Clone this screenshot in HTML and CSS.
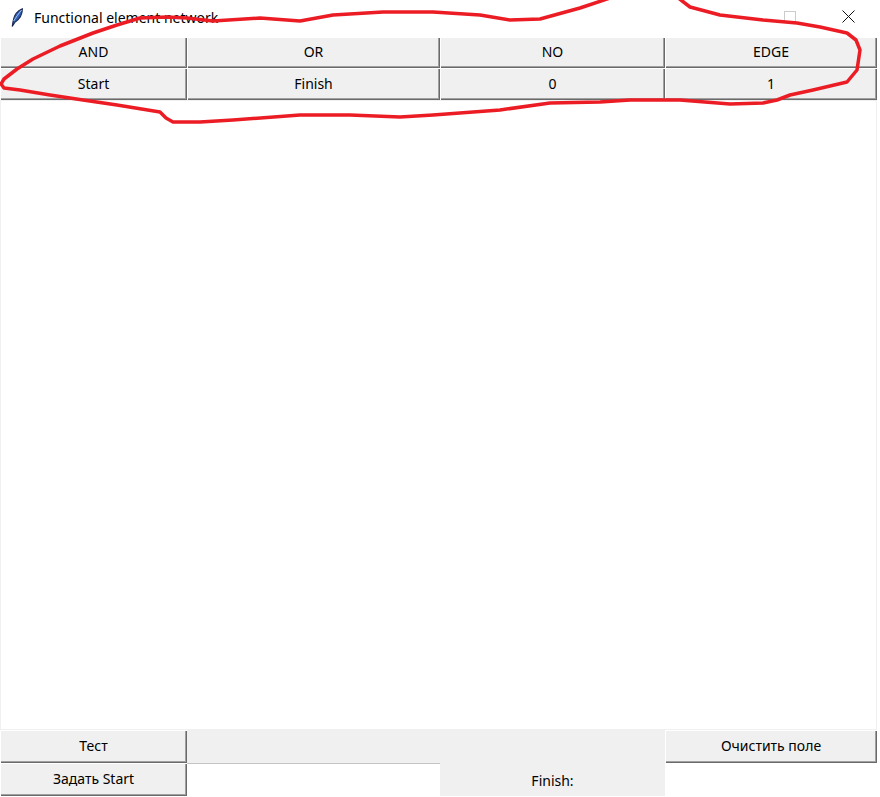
FILE: index.html
```html
<!DOCTYPE html>
<html>
<head>
<meta charset="utf-8">
<title>Functional element network</title>
<link rel="stylesheet" href="styles.css">
</head>
<body>
<div class="window">
  <div class="titlebar">
    <svg class="feather" width="12" height="19" viewBox="0 0 12 19">
      <path d="M1.2 18.5 L2.2 12.5 C3 8 6 3 11.3 0.8 C11.5 5.5 9 11 3.6 14.6 Z" fill="#2f5fb5" stroke="#16264d" stroke-width="1.1"/>
      <path d="M2.6 13 C5 9.5 8 5 10.6 2" fill="none" stroke="#a8c6f2" stroke-width="1"/>
    </svg>
    <span class="title">Functional element network</span>
    <div class="controls">
      <svg class="ctl max" width="12" height="12" viewBox="0 0 12 12"><rect x="0.5" y="0.5" width="11" height="11" fill="none" stroke="#cccccc"/></svg>
      <svg class="ctl close" width="13" height="13" viewBox="0 0 13 13"><path d="M0.5 0.5 L12.5 12.5 M12.5 0.5 L0.5 12.5" stroke="#111" stroke-width="1"/></svg>
    </div>
  </div>
  <div class="app">
    <div class="toolbar">
      <div class="btn">AND</div>
      <div class="btn">OR</div>
      <div class="btn">NO</div>
      <div class="btn">EDGE</div>
      <div class="btn">Start</div>
      <div class="btn">Finish</div>
      <div class="btn">0</div>
      <div class="btn">1</div>
    </div>
    <div class="canvas"></div>
    <div class="bottom">
      <div class="btn">Тест</div>
      <div class="fill"></div>
      <div class="btn">Очистить поле</div>
      <div class="btn">Задать Start</div>
      <div class="entry"></div>
      <div class="label">Finish:</div>
      <div class="entry2"></div>
    </div>
  </div>
  <svg class="scribble" width="880" height="797" viewBox="0 0 880 797">
    <path d="M613,-3 L580,8 L540,19 L510,20 L480,15 L433,12 L383,12 L333,15 L300,21 L260,18 L213,21 L187,18 L167,17 L140,18 L117,25 L93,33 L60,46 L33,59 L17,69 L4,79 L1,84 L4,88 L20,90 L50,95 L83,100 L117,105 L160,112 L166,118 L173,122 L200,122 L233,120 L300,115 L350,115 L400,117 L433,115 L500,110 L550,103 L600,102 L630,100 L680,100 L730,104 L763,103 L777,100 L790,95 L813,90 L847,82 L857,70 L860,50 L856,40 L847,33 L820,27 L797,23 L763,20 L720,15 L690,7 L677,-3" fill="none" stroke="#ec1c24" stroke-width="3.5" stroke-linejoin="round" stroke-linecap="round"/>
  </svg>
</div>
</body>
</html>
```

FILE: styles.css
```css
html, body {
  margin: 0;
  padding: 0;
  background: #ffffff;
}

body {
  font-family: "Noto Sans", "Liberation Sans", sans-serif;
  font-size: 14px;
  color: #000;
}

.window {
  position: relative;
  width: 880px;
  height: 797px;
  overflow: hidden;
}

.titlebar {
  height: 37px;
  display: flex;
  align-items: center;
  background: #ffffff;
}

.feather {
  margin-left: 11px;
  margin-right: 11px;
  margin-top: -2px;
}

.title {
  font-size: 14px;
  margin-top: -3px;
  color: #000;
}

.controls {
  margin-left: auto;
  display: flex;
  align-items: center;
  margin-right: 25px;
  margin-top: -4px;
}

.ctl.max {
  margin-right: 46px;
}

.app {
  width: 877px;
}

.toolbar {
  display: grid;
  grid-template-columns: 187px 253px 225px 212px;
  grid-template-rows: 31px 32px;
  background: #f0f0f0;
}

.btn {
  background: #f0f0f0;
  display: flex;
  align-items: center;
  justify-content: center;
  box-shadow: inset 1px 1px #ffffff, inset -1px -1px #6a6a6a, inset -2px -2px #a0a0a0;
  padding-bottom: 2px;
  box-sizing: border-box;
}

.canvas {
  height: 630px;
  background: #ffffff;
  border: 1px solid #f0f0f0;
  box-sizing: border-box;
}

.bottom {
  display: grid;
  grid-template-columns: 187px 253px 225px 212px;
  grid-template-rows: 33px 33px;
  background: #f0f0f0;
}

.bottom .fill {
  grid-column: 2 / 4;
  background: #f0f0f0;
}

.entry {
  background: #ffffff;
  border-top: 1px solid #c4c4c4;
}

.label {
  background: #f0f0f0;
  display: flex;
  align-items: center;
  justify-content: center;
  padding-top: 2px;
}

.entry2 {
  background: #ffffff;
}

.scribble {
  position: absolute;
  left: 0;
  top: 0;
  pointer-events: none;
}
```
